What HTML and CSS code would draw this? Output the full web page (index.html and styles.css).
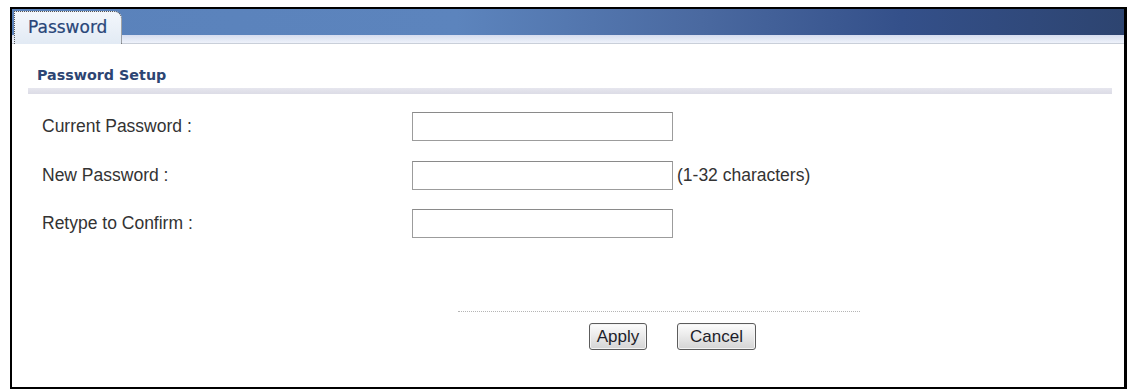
FILE: index.html
```html
<!DOCTYPE html>
<html lang="en">

<head>
    <meta charset="UTF-8">
    <title>Password</title>
    <link rel="stylesheet" href="styles.css">
</head>

<body>
    <div class="panel">
        <div class="tabbar">
            <div class="tab">Password</div>
        </div>

        <div class="section-title">Password Setup</div>
        <div class="section-bar"></div>

        <div class="rows">
            <div class="row">
                <span class="label">Current Password :</span>
                <input class="field" type="password">
            </div>
            <div class="row">
                <span class="label">New Password :</span>
                <input class="field" type="password">
                <span class="hint">(1-32 characters)</span>
            </div>
            <div class="row">
                <span class="label">Retype to Confirm :</span>
                <input class="field" type="password">
            </div>
        </div>

        <div class="divider"></div>
        <div class="actions">
            <button class="btn btn-apply">Apply</button>
            <button class="btn btn-cancel">Cancel</button>
        </div>
    </div>
</body>

</html>
```

FILE: styles.css
```css
* {
    margin: 0;
    padding: 0;
    box-sizing: border-box;
}

body {
    background-color: #fff;
    font-family: "Liberation Sans", Arial, sans-serif;
}

.panel {
    margin: 7px 0 0 10px;
    width: 1117px;
    height: 382px;
    border: 2px solid #000;
    border-right-width: 3px;
    background-color: #fff;
}

.tabbar {
    display: flex;
    align-items: flex-end;
    height: 35px;
    padding-left: 2px;
    background:
        linear-gradient(#d6ddef, #eef2fa) left bottom / 100% 8px no-repeat,
        linear-gradient(90deg, #5a82bb 0%, #5c84bd 40%, #4a69a0 62%, #34508a 80%, #2d4470 100%) left top / 100% 27px no-repeat;
    border-bottom: 1px solid #c9cfd9;
}

.tab {
    width: 108px;
    height: 33px;
    margin-bottom: -1px;
    padding-left: 13px;
    background: linear-gradient(#f3f7fc, #e2eaf4);
    border: 1px dotted #555;
    border-bottom: none;
    border-top-right-radius: 8px;
    color: #294679;
    font-family: "DejaVu Sans", Verdana, sans-serif;
    font-size: 17px;
    line-height: 31px;
    -webkit-text-stroke: 0.2px #294679;
}

.section-title {
    margin: 21px 0 0 25px;
    color: #2d4573;
    font-family: "DejaVu Sans", Verdana, sans-serif;
    font-weight: bold;
    font-size: 14.3px;
    line-height: 20px;
}

.section-bar {
    margin: 3px 0 0 16px;
    width: 1084px;
    height: 6px;
    background: linear-gradient(#e6e6ee, #dcdce6);
}

.rows {
    display: flex;
    flex-direction: column;
    gap: 19.5px;
    margin-top: 18px;
}

.row {
    display: flex;
    align-items: center;
    height: 29px;
}

.label {
    width: 370px;
    margin-left: 30px;
    color: #333;
    font-size: 17.5px;
}

.field {
    width: 261px;
    height: 29px;
    border: 1px solid #9c9c9c;
    border-top-color: #8a8a8a;
    background-color: #fff;
}

.hint {
    margin-left: 4px;
    color: #333;
    font-size: 17.5px;
}

.divider {
    margin: 73px 0 0 446px;
    width: 402px;
    border-top: 1px dotted #b5b5b5;
}

.actions {
    display: flex;
    gap: 30px;
    margin: 11px 0 0 577px;
}

.btn {
    height: 27px;
    border: 1px solid #5c5c5c;
    border-radius: 3px;
    background: linear-gradient(#fdfdfd, #e9e9e9 50%, #d4d4d4);
    box-shadow: inset 0 0 0 1px #f4f4f4;
    color: #1e1e2a;
    font-family: "Liberation Sans", Arial, sans-serif;
    font-size: 17px;
    cursor: pointer;
}

.btn-apply {
    width: 58px;
}

.btn-cancel {
    width: 79px;
}
```
